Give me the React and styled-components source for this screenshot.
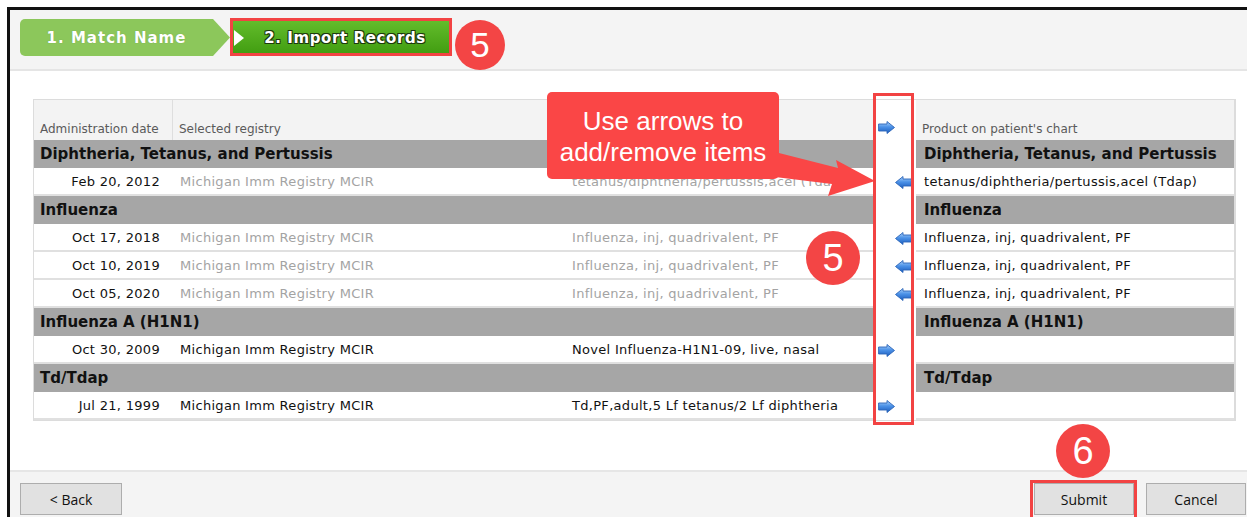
import React from 'react';
import styled, { createGlobalStyle } from 'styled-components';

const GlobalStyle = createGlobalStyle`
  html, body { margin: 0; padding: 0; background: #fff; }
  body { font-family: "DejaVu Sans", Verdana, sans-serif; overflow: hidden; }
`;

const Page = styled.div`
  position: relative;
  width: 1247px;
  height: 517px;
  overflow: hidden;
  background: #fff;
`;

const Window = styled.div`
  margin: 7px 0 0 7px;
  height: 510px;
  box-sizing: border-box;
  border-top: 3px solid #111;
  border-left: 3px solid #111;
  display: flex;
  flex-direction: column;
`;

const StepsBar = styled.div`
  flex-shrink: 0;
  height: 61px;
  box-sizing: border-box;
  padding: 9px 0 0 10px;
  background: #f4f4f4;
  border-bottom: 2px solid #e5e5e5;
  display: flex;
  align-items: flex-start;
`;

const StepTab = styled.div`
  height: 37px;
  box-sizing: border-box;
  display: flex;
  align-items: center;
  justify-content: center;
  font-family: "DejaVu Sans", Verdana, sans-serif;
  font-weight: bold;
  font-size: 15px;
  letter-spacing: 1px;
  color: #fff;
  white-space: nowrap;
`;

const DoneTab = styled(StepTab)`
  width: 210px;
  padding-right: 17px;
  background: #8cc75b;
  border-radius: 5px 0 0 5px;
  clip-path: polygon(0 0, 193px 0, 210px 50%, 193px 100%, 0 100%);
  text-shadow: 0 0 1px rgba(80, 120, 60, 0.5);
`;

const ActiveTab = styled(StepTab)`
  position: relative;
  width: 220px;
  padding-left: 10px;
  letter-spacing: 0.6px;
  background: linear-gradient(#65be2d, #3f9b0f);
  text-shadow: 1px 1px 0 #1d3a0c, -1px -1px 0 #1d3a0c, 1px -1px 0 #1d3a0c, -1px 1px 0 #1d3a0c;

  &::before {
    content: '';
    position: absolute;
    left: 4px;
    top: 11px;
    border-style: solid;
    border-width: 8px 0 8px 10px;
    border-color: transparent transparent transparent #fff;
  }
`;

const Content = styled.div`
  flex: 1;
  padding: 28px 11px 0 23px;
  background: #fff;
`;

const Table = styled.div`
  display: grid;
  grid-template-columns: 139px 392px 311px 40px 1fr;
  grid-template-rows: 40px;
  grid-auto-rows: 28px;
  border-top: 1px solid #dcdcdc;
  border-left: 1px solid #dcdcdc;
  border-right: 2px solid #dcdcdc;
  border-bottom: 1px solid #dcdcdc;
  font-family: "DejaVu Sans", Verdana, sans-serif;
  font-size: 13px;
  letter-spacing: 0.3px;
`;

const HeadCell = styled.div`
  box-sizing: border-box;
  background: ${(p) => (p.$blank ? '#fff' : '#f3f3f3')};
  border-right: ${(p) => (p.$divider ? '1px solid #dedede' : 'none')};
  display: flex;
  align-items: flex-end;
  padding: 0 0 ${(p) => (p.$icon ? '6px' : '4px')} ${(p) => (p.$icon ? '2px' : '6px')};
  font-size: 12px;
  letter-spacing: 0;
  color: #5a5a5a;
  white-space: nowrap;
`;

const GroupCell = styled.div`
  grid-column: ${(p) => (p.$wide ? 'span 3' : 'span 1')};
  background: #a6a6a6;
  display: flex;
  align-items: center;
  padding-left: ${(p) => (p.$wide ? '6px' : '8px')};
  font-weight: bold;
  font-size: 15px;
  letter-spacing: 0;
  color: #111;
  white-space: nowrap;
  overflow: hidden;
`;

const Cell = styled.div`
  box-sizing: border-box;
  background: #fff;
  border-bottom: 2px solid #e0e0e0;
  display: flex;
  align-items: center;
  justify-content: ${(p) => (p.$right ? 'flex-end' : 'flex-start')};
  padding: ${(p) => (p.$right ? '0 13px 0 0' : p.$chart ? '0 0 0 8px' : '0 0 0 7px')};
  color: ${(p) => (p.$muted ? '#a3a3a3' : '#111')};
  white-space: nowrap;
  overflow: hidden;
`;

const ArrowCell = styled.div`
  background: #fff;
  display: flex;
  align-items: center;
  justify-content: ${(p) => (p.$dir === 'left' ? 'flex-end' : 'flex-start')};
  padding: ${(p) => (p.$dir === 'left' ? '0 4px 0 0' : '0 0 0 2px')};
`;

const Footer = styled.div`
  flex-shrink: 0;
  height: 47px;
  box-sizing: border-box;
  padding: 11px 1px 0 10px;
  background: #f4f4f4;
  border-top: 2px solid #e6e6e6;
  display: flex;
  align-items: flex-start;
  gap: 12px;
`;

const Button = styled.button`
  width: ${(p) => p.$w || 100}px;
  height: 32px;
  margin-left: ${(p) => (p.$push ? 'auto' : '0')};
  background: #e1e1e1;
  border: 1px solid #adadad;
  border-radius: 0;
  font-family: "Open Sans", "Noto Sans", sans-serif;
  font-size: 14px;
  color: #111;
  padding: 0;
`;

/* annotation layer */
const Badge = styled.div`
  position: absolute;
  left: ${(p) => p.$x}px;
  top: ${(p) => p.$y}px;
  width: ${(p) => p.$d}px;
  height: ${(p) => p.$d}px;
  border-radius: 50%;
  background: #f34545;
  color: #fff;
  font-family: "Liberation Sans", Arial, sans-serif;
  font-size: ${(p) => Math.round(p.$d * 0.7)}px;
  display: flex;
  align-items: center;
  justify-content: center;
  z-index: 5;
`;

const Outline = styled.div`
  position: absolute;
  left: ${(p) => p.$x}px;
  top: ${(p) => p.$y}px;
  width: ${(p) => p.$w}px;
  height: ${(p) => p.$h}px;
  box-sizing: border-box;
  border: 3px solid #f24343;
  z-index: 4;
`;

const Callout = styled.div`
  position: absolute;
  left: 547px;
  top: 92px;
  width: 232px;
  height: 87px;
  box-sizing: border-box;
  padding-top: 14px;
  border-radius: 5px;
  background: #fa4646;
  color: #fff;
  font-family: "Liberation Sans", Arial, sans-serif;
  font-size: 26px;
  line-height: 31px;
  text-align: center;
  z-index: 4;
`;

const CalloutPointer = styled.svg`
  position: absolute;
  left: 760px;
  top: 140px;
  z-index: 4;
`;

function MoveArrow({ dir }) {
  const id = `grad-${dir}`;
  const pts =
    dir === 'right'
      ? '0.6,3 9,3 9,0.5 16.5,6.5 9,12.5 9,10 0.6,10'
      : '16.4,3 8,3 8,0.5 0.5,6.5 8,12.5 8,10 16.4,10';
  return (
    <svg width="17" height="13" viewBox="0 0 17 13">
      <defs>
        <linearGradient id={id} x1="0" y1="0" x2="0" y2="1">
          <stop offset="0" stopColor="#b0d4f9" />
          <stop offset="0.45" stopColor="#4c92e8" />
          <stop offset="1" stopColor="#1a5cbd" />
        </linearGradient>
      </defs>
      <polygon points={pts} fill={`url(#${id})`} stroke="#2b64b9" strokeWidth="0.9" strokeLinejoin="round" />
    </svg>
  );
}

const groups = [
  {
    title: 'Diphtheria, Tetanus, and Pertussis',
    rows: [
      {
        date: 'Feb 20, 2012',
        registry: 'Michigan Imm Registry MCIR',
        product: 'tetanus/diphtheria/pertussis,acel (Tdap)',
        chart: 'tetanus/diphtheria/pertussis,acel (Tdap)',
        dir: 'left',
      },
    ],
  },
  {
    title: 'Influenza',
    rows: ['Oct 17, 2018', 'Oct 10, 2019', 'Oct 05, 2020'].map((date) => ({
      date,
      registry: 'Michigan Imm Registry MCIR',
      product: 'Influenza, inj, quadrivalent, PF',
      chart: 'Influenza, inj, quadrivalent, PF',
      dir: 'left',
    })),
  },
  {
    title: 'Influenza A (H1N1)',
    rows: [
      {
        date: 'Oct 30, 2009',
        registry: 'Michigan Imm Registry MCIR',
        product: 'Novel Influenza-H1N1-09, live, nasal',
        chart: '',
        dir: 'right',
      },
    ],
  },
  {
    title: 'Td/Tdap',
    rows: [
      {
        date: 'Jul 21, 1999',
        registry: 'Michigan Imm Registry MCIR',
        product: 'Td,PF,adult,5 Lf tetanus/2 Lf diphtheria',
        chart: '',
        dir: 'right',
      },
    ],
  },
];

function ImportTable() {
  return (
    <Table>
      <HeadCell $divider>Administration date</HeadCell>
      <HeadCell>Selected registry</HeadCell>
      <HeadCell />
      <HeadCell $blank $icon>
        <MoveArrow dir="right" />
      </HeadCell>
      <HeadCell>Product on patient's chart</HeadCell>
      {groups.map((g) => (
        <React.Fragment key={g.title}>
          <GroupCell $wide>{g.title}</GroupCell>
          <ArrowCell />
          <GroupCell>{g.title}</GroupCell>
          {g.rows.map((r, i) => {
            const imported = r.dir === 'left';
            return (
              <React.Fragment key={`${g.title}-${i}`}>
                <Cell $right>{r.date}</Cell>
                <Cell $muted={imported}>{r.registry}</Cell>
                <Cell $muted={imported}>{r.product}</Cell>
                <ArrowCell $dir={r.dir}>
                  <MoveArrow dir={r.dir} />
                </ArrowCell>
                <Cell $chart>{r.chart}</Cell>
              </React.Fragment>
            );
          })}
        </React.Fragment>
      ))}
    </Table>
  );
}

export default function App() {
  return (
    <>
      <GlobalStyle />
      <Page>
        <Window>
          <StepsBar>
            <DoneTab>1. Match Name</DoneTab>
            <ActiveTab>2. Import Records</ActiveTab>
          </StepsBar>
          <Content>
            <ImportTable />
          </Content>
          <Footer>
            <Button $w={102}>&lt; Back</Button>
            <Button $push>Submit</Button>
            <Button>Cancel</Button>
          </Footer>
        </Window>

        <Outline $x={230} $y={18} $w={222} $h={38} />
        <Badge $x={455} $y={20} $d={50}>5</Badge>

        <Callout>
          Use arrows to
          <br />
          add/remove items
        </Callout>
        <CalloutPointer width="120" height="62" viewBox="0 0 120 62">
          <polygon points="15,12 78,28 76,20 115,41 68,56 72,44 15,37" fill="#fa4646" />
        </CalloutPointer>

        <Outline $x={873} $y={93} $w={41} $h={332} />
        <Badge $x={806} $y={231} $d={54}>5</Badge>

        <Outline $x={1030} $y={480} $w={107} $h={40} />
        <Badge $x={1056} $y={424} $d={54}>6</Badge>
      </Page>
    </>
  );
}
